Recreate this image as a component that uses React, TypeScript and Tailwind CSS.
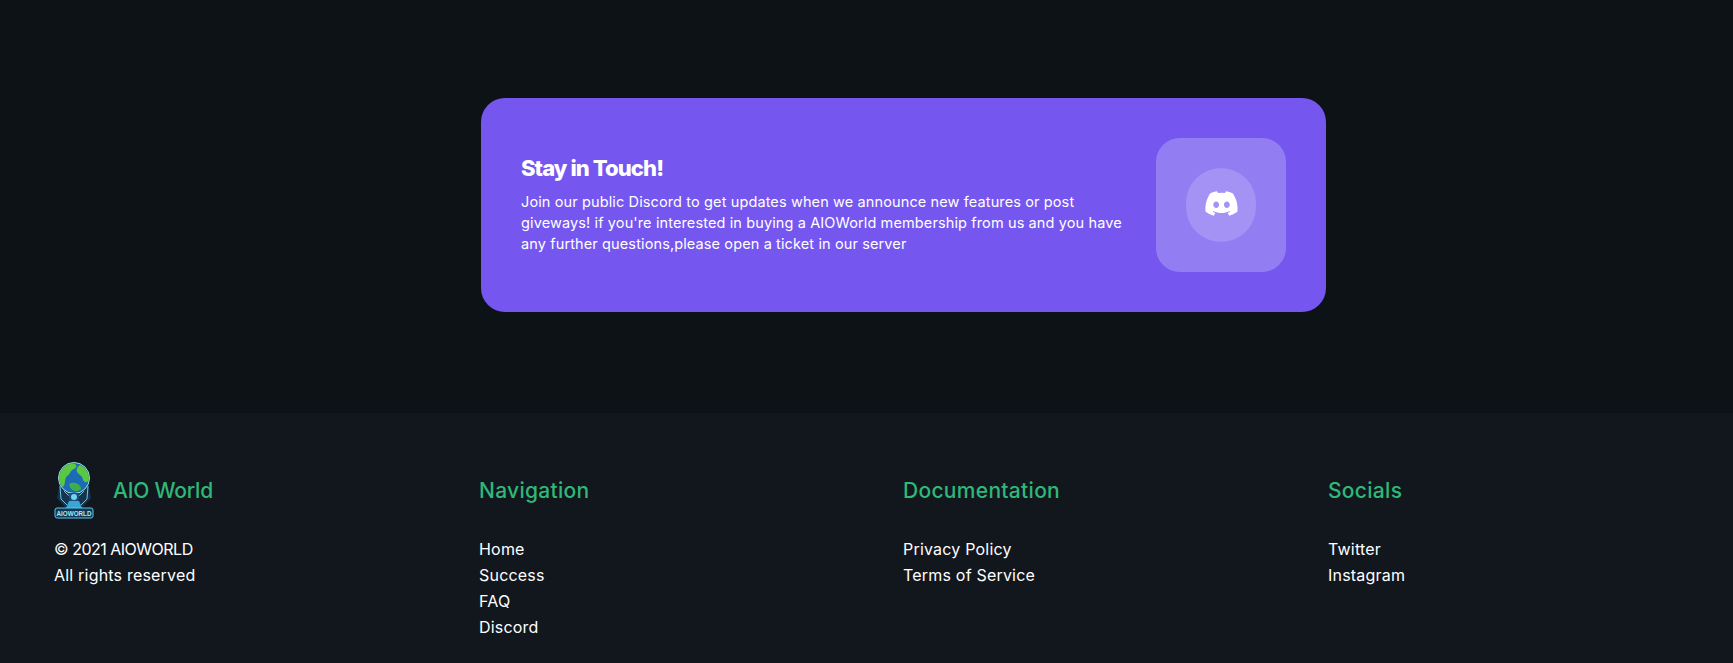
import { FaDiscord } from "react-icons/fa6";

const columns = [
  { title: "Navigation", links: ["Home", "Success", "FAQ", "Discord"] },
  { title: "Documentation", links: ["Privacy Policy", "Terms of Service"] },
  { title: "Socials", links: ["Twitter", "Instagram"] },
];

function Logo() {
  return (
    <svg viewBox="0 0 40 56" className="h-[56px] w-[40px] shrink-0 overflow-visible">
      {/* robot shoulders and arms */}
      <path d="M6 20 L3 36 L12 46 L28 46 L37 36 L34 20 Z" fill="#14344f" />
      <path d="M6 24 L7 37 L13 43 M34 24 L33 37 L27 43 M10 29 L15 34 M30 29 L25 34" stroke="#6fc6e4" strokeWidth="1" fill="none" />
      {/* globe */}
      <circle cx="20" cy="16" r="15.5" fill="#1c6bb5" stroke="#9adfd2" strokeWidth="1" />
      <path d="M5 15 C6 8 11 3 17 1.5 C23 1 24 5 20 7 C15 9 17 12 13 14 C10 17 12 22 9 25 C6 22 5 19 5 15 Z" fill="#5bc93f" />
      <path d="M26 3 C32 6 35 11 35 17 C34 21 31 21 29 18 C29 14 25 13 23 10 C22 7 24 4 26 3 Z" fill="#5bc93f" />
      <path d="M15 22 C20 19 27 22 27 27 C23 31 16 29 15 22 Z" fill="#3fae4a" />
      {/* robot head and chest */}
      <path d="M14 31 L26 31 L24 39 L16 39 Z" fill="#1d4f7d" />
      <circle cx="20" cy="35" r="3" fill="#6ed6f0" />
      <path d="M15 39 L25 39 L28 46 L12 46 Z" fill="#3aa6d8" />
      {/* name badge */}
      <rect x="1" y="46" width="38" height="10" rx="2" fill="#0e3854" stroke="#58c4ea" strokeWidth="1" />
      <text x="20" y="53.8" textAnchor="middle" textLength="35" lengthAdjust="spacingAndGlyphs" fontSize="7.5" fontWeight="700" fontFamily="'Liberation Sans', sans-serif" fill="#a5ecfa">AIOWORLD</text>
    </svg>
  );
}

export default function App() {
  return (
    <div className="min-h-[663px] bg-[#0d1216] font-['Inter','Liberation_Sans',sans-serif] text-white">
      <section className="h-[413px] pl-[481px] pt-[98px]">
        <div className="flex h-[214px] w-[845px] items-center justify-between rounded-[24px] bg-[#7557f0] px-[40px]">
          <div className="-mt-[2px] w-[612px]">
            <h2 className="-mt-[2px] text-[22px] leading-[33px] font-extrabold tracking-[-0.9px]">Stay in Touch!</h2>
            <p className="mt-[6px] text-[14.5px] leading-[21px] tracking-[0.12px]">
              Join our public Discord to get updates when we announce new features or post giveways! if you're interested in buying a AIOWorld membership from us and you have any further questions,please open a ticket in our server
            </p>
          </div>
          <div className="flex h-[134px] w-[130px] items-center justify-center rounded-[24px] bg-[#937df3]">
            <div className="flex h-[74px] w-[70px] items-center justify-center rounded-full bg-[#a592f5]">
              <FaDiscord className="-mt-[3px] h-[35px] w-[35px] text-white" />
            </div>
          </div>
        </div>
      </section>
      <footer className="grid h-[250px] grid-cols-[425px_424px_425px_1fr] bg-[#12171e] pl-[54px] pt-[49px]">
        <div>
          <div className="flex h-[56px] items-center gap-[19px]">
            <Logo />
            <h3 className="pt-[1px] text-[21px] font-medium tracking-[-0.2px] text-[#2fb877]">AIO World</h3>
          </div>
          <p className="mt-[18px] text-[16px] leading-[26px] tracking-[0.2px]">
            <span className="tracking-[-0.5px]">© 2021 AIOWORLD</span>
            <br />
            All rights reserved
          </p>
        </div>
        {columns.map((col) => (
          <div key={col.title}>
            <h3 className="flex h-[56px] items-center pt-[1px] text-[21px] font-medium tracking-[0.3px] text-[#2fb877]">{col.title}</h3>
            <ul className="mt-[18px] text-[16px] leading-[26px] tracking-[0.2px]">
              {col.links.map((link) => (
                <li key={link}>{link}</li>
              ))}
            </ul>
          </div>
        ))}
      </footer>
    </div>
  );
}
